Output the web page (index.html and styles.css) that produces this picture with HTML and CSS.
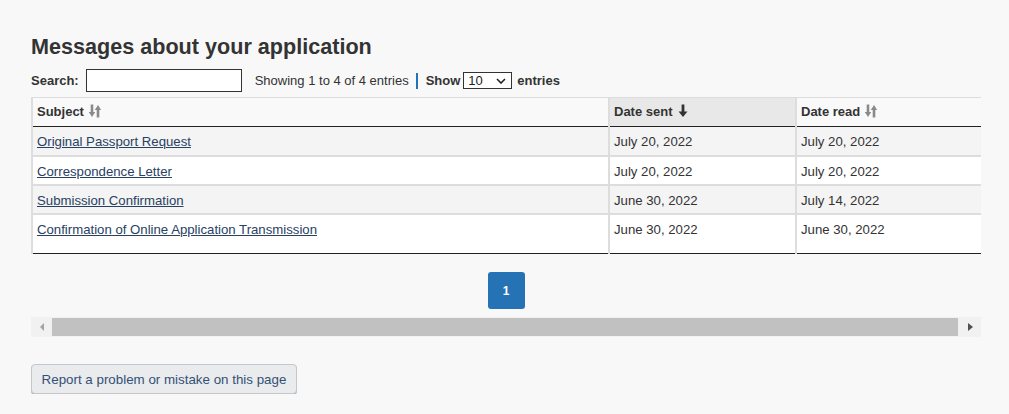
FILE: index.html
```html
<!DOCTYPE html>
<html lang="en">
<head>
<meta charset="utf-8">
<title>Messages about your application</title>
<link rel="stylesheet" href="styles.css">
</head>
<body>
<main class="page">
  <h2 class="title">Messages about your application</h2>
  <div class="toolbar">
    <label class="search-label" for="search">Search:</label>
    <input class="search-input" id="search" type="search">
    <span class="info">Showing 1 to 4 of 4 entries</span>
    <span class="length">
      <span class="bold">Show</span>
      <span class="select-wrap">
        <select class="select"><option>10</option><option>25</option><option>50</option></select>
        <svg class="chev" viewBox="0 0 10 6" width="10" height="6"><path d="M1 1 L5 5 L9 1" fill="none" stroke="#222" stroke-width="1.6"/></svg>
      </span>
      <span class="bold">entries</span>
    </span>
  </div>
  <div class="scroller">
    <table class="grid">
      <colgroup><col class="c1"><col class="c2"><col class="c3"></colgroup>
      <thead>
        <tr>
          <th>Subject <svg class="sort" viewBox="0 0 12 14" width="12" height="14"><path d="M3 0.5v9" fill="none" stroke="#8a8a8a" stroke-width="2.6"/><path d="M-0.2 8h6.4L3 13z" fill="#8a8a8a"/><path d="M9 13.5v-9" fill="none" stroke="#8a8a8a" stroke-width="2.6"/><path d="M5.8 6h6.4L9 1z" fill="#8a8a8a"/></svg></th>
          <th class="sorted">Date sent <svg class="sort" viewBox="0 0 12 14" width="12" height="14"><path d="M6 0.5v9" stroke="#333" stroke-width="2.8" fill="none"/><path d="M1.5 7.5h9L6 13z" fill="#333"/></svg></th>
          <th>Date read <svg class="sort" viewBox="0 0 12 14" width="12" height="14"><path d="M3 0.5v9" fill="none" stroke="#8a8a8a" stroke-width="2.6"/><path d="M-0.2 8h6.4L3 13z" fill="#8a8a8a"/><path d="M9 13.5v-9" fill="none" stroke="#8a8a8a" stroke-width="2.6"/><path d="M5.8 6h6.4L9 1z" fill="#8a8a8a"/></svg></th>
        </tr>
      </thead>
      <tbody>
        <tr class="odd"><td><a href="#">Original Passport Request</a></td><td>July 20, 2022</td><td>July 20, 2022</td></tr>
        <tr><td><a href="#">Correspondence Letter</a></td><td>July 20, 2022</td><td>July 20, 2022</td></tr>
        <tr class="odd"><td><a href="#">Submission Confirmation</a></td><td>June 30, 2022</td><td>July 14, 2022</td></tr>
        <tr class="last"><td><a href="#">Confirmation of Online Application Transmission</a></td><td>June 30, 2022</td><td>June 30, 2022</td></tr>
      </tbody>
    </table>
  </div>
  <div class="pager"><button class="page-btn" type="button">1</button></div>
  <div class="hscroll">
    <span class="arrow arrow-left"></span>
    <span class="thumb"></span>
    <span class="arrow arrow-right"></span>
  </div>
  <button class="report" type="button">Report a problem or mistake on this page</button>
</main>
</body>
</html>
```
FILE: styles.css
```css
* { box-sizing: border-box; }
html, body { margin: 0; padding: 0; background: #f8f8f8; }
body { font-family: "Liberation Sans", Arial, sans-serif; color: #333; }
.page { width: 950px; margin-left: 31px; padding-top: 33px; }
.title { margin: 0; font-size: 21.6px; line-height: 28px; font-weight: bold; color: #333; }
.toolbar { display: flex; align-items: center; height: 23px; margin-top: 8px; font-size: 13px; }
.search-label { font-weight: bold; margin-right: 7px; }
.search-input { width: 156px; height: 23px; border: 1px solid #333; background: #fff; padding: 0 4px; margin: 0; border-radius: 0; }
.info { margin-left: 13px; padding-right: 7px; }
.length { display: inline-flex; align-items: center; border-left: 2px solid #2572b4; padding-left: 8px; height: 16px; }
.bold { font-weight: bold; }
.select-wrap { position: relative; display: inline-block; margin: 0 5px 0 3px; }
.select { -webkit-appearance: none; appearance: none; width: 49px; height: 17px; border: 1px solid #333; border-radius: 0; background: #fff; font: 13px "Liberation Sans", Arial, sans-serif; color: #222; padding: 0 0 0 4px; display: block; }
.chev { position: absolute; right: 6px; top: 6px; pointer-events: none; }
.scroller { width: 950px; overflow: hidden; margin-top: 5px; }
.grid { width: 964px; table-layout: fixed; border-collapse: collapse; font-size: 13.2px; }
.c1 { width: 577px; }
.c2 { width: 187px; }
.c3 { width: 200px; }
.grid th, .grid td { text-align: left; vertical-align: top; padding: 6px 6px 0 4px; line-height: 16px; border-left: 2px solid #ddd; }
.grid th { height: 29px; padding-top: 6px; font-weight: bold; background: #f9f9f9; border-top: 1px solid #ddd; border-bottom: 1px solid #222; font-size: 13px; }
.grid th.sorted { background: #e8e8e8; }
.grid td { height: 29px; padding-top: 7px; background: #fff; border-top: 2px solid #ddd; }
.grid tbody tr:first-child td { border-top: none; }
.grid tr.odd td { background: #f4f4f4; }
.grid tr.last td { height: 40px; border-bottom: 1px solid #222; }
.sort { vertical-align: -2px; margin-left: 1px; }
.grid a { color: #284162; text-decoration: underline; }
.pager { display: flex; justify-content: center; margin-top: 18px; }
.page-btn { width: 37px; height: 37px; border: none; border-radius: 3px; background: #2572b4; color: #fff; font: bold 12px "Liberation Sans", Arial, sans-serif; padding: 0; }
.hscroll { display: flex; align-items: center; height: 20px; margin-top: 8px; background: #f1f1f1; }
.arrow { width: 21px; display: flex; justify-content: center; }
.arrow-left::before { content: ""; border-style: solid; border-width: 4px 4px 4px 0; border-color: transparent #a3a3a3 transparent transparent; }
.arrow-right::before { content: ""; border-style: solid; border-width: 4.5px 0 4.5px 5px; border-color: transparent transparent transparent #505050; }
.thumb { flex: 1; height: 18px; background: #c1c1c1; margin: 0 2px 0 0; }
.report { display: block; margin-top: 27px; width: 266px; height: 30px; background: #eaebed; border: 1px solid #c3c6cb; border-radius: 4px; color: #335075; font: 13.35px "Liberation Sans", Arial, sans-serif; padding: 0; box-shadow: 0 1px 0 #b8bbc0; }
```
